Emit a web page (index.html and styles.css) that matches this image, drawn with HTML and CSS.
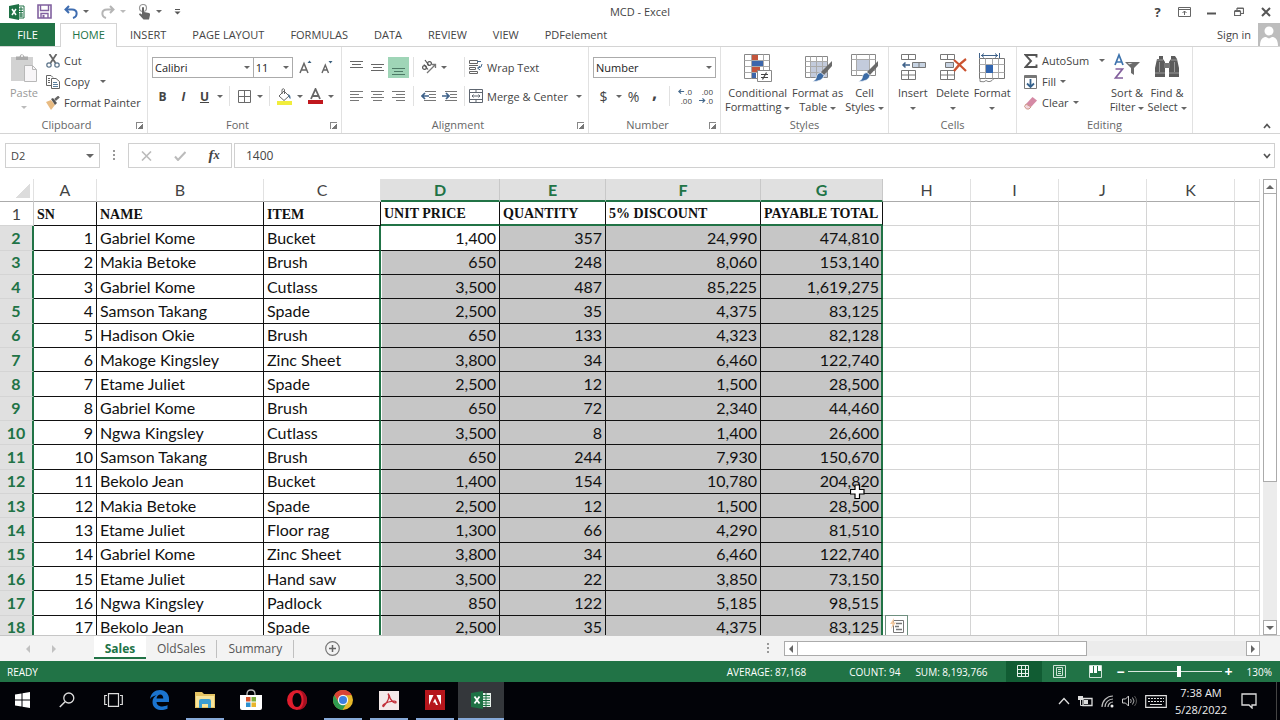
FILE: index.html
```html
<!DOCTYPE html>
<html lang="en">
<head>
    <meta charset="UTF-8">
    <meta name="viewport" content="width=device-width, initial-scale=1.0">
    <title>MCD - Excel</title>
    <link rel="stylesheet" href="styles.css">
</head>
<body>
    <!-- Title bar -->
    <header class="titlebar">
        <div class="quick">
            <svg class="app-icon" width="16" height="16" viewBox="0 0 16 16"><path d="M9 2h6v12H9z" fill="#fff" stroke="#1e7145"/><path d="M10 5h4M10 7.500h4M10 10h4M10 12h4M12 3v10" stroke="#1e7145"/><path d="M0 2l10-2v16L0 14z" fill="#1e7145"/><path d="M3 5l4 6M7 5l-4 6" stroke="#fff" stroke-width="1.500"/></svg>
            <button class="qbtn" aria-label="Save"><svg width="15" height="15" viewBox="0 0 15 15"><path d="M1 1h13v13H1z" fill="#fff" stroke="#80609f" stroke-width="1.600"/><path d="M3.500 1v5.500h8V1M4 14V9.500h7V14" fill="none" stroke="#80609f" stroke-width="1.400"/><path d="M5.500 11h2v3h-2z" fill="#80609f"/></svg></button>
            <button class="qbtn" aria-label="Undo"><svg width="14" height="14" viewBox="0 0 14 14"><path d="M5 1L1.500 4.500 5 8M1.500 4.500H8c6 0 6 7 1 8.500" fill="none" stroke="#3f6db0" stroke-width="2"/></svg><i class="caret"></i></button>
            <button class="qbtn faded" aria-label="Redo"><svg width="14" height="14" viewBox="0 0 14 14"><path d="M9 1l3.500 3.500L9 8M12.500 4.500H6c-6 0-6 7-1 8.500" fill="none" stroke="#b5b5b5" stroke-width="2"/></svg><i class="caret"></i></button>
            <button class="qbtn" aria-label="Touch mode"><svg width="13" height="16" viewBox="0 0 13 16"><circle cx="5" cy="4" r="3.500" fill="none" stroke="#999" stroke-width="1.200"/><path d="M4 3.500q1-1 2 0V8l5 1q1.500.5 1 2l-1 4.500H5.500L1 10.500q0-1.500 1.500-1L4 10.500z" fill="#666"/></svg><i class="caret"></i></button>
            <button class="qbtn" aria-label="Customize toolbar"><svg width="7" height="6" viewBox="0 0 7 6"><path d="M1 .5h5" stroke="#555"/><path d="M.5 2.500h6l-3 3z" fill="#555"/></svg></button>
        </div>
        <h1 class="title">MCD - Excel</h1>
        <div class="window-buttons">
            <button aria-label="Help" class="help">?</button>
            <button aria-label="Ribbon display options"><svg width="13" height="10" viewBox="0 0 13 10"><path d="M.5.5h12v9H.5zM.5 2.500h12M6.500 8V4M4.500 6l2-2 2 2" fill="none" stroke="#666"/></svg></button>
            <button aria-label="Minimize"><svg width="9" height="9" viewBox="0 0 9 9"><path d="M0 6.500h9" stroke="#555" stroke-width="2"/></svg></button>
            <button aria-label="Restore"><svg width="10" height="10" viewBox="0 0 10 10"><path d="M.5 4.500h6v4h-6zM.5 3.500h6M3 3V1.500h6.500v5H7M3 1h6.500" fill="none" stroke="#666" stroke-width="1.200"/></svg></button>
            <button aria-label="Close"><svg width="10" height="10" viewBox="0 0 10 10"><path d="M1 1l8 8M9 1L1 9" stroke="#555" stroke-width="2"/></svg></button>
        </div>
    </header>

    <!-- Ribbon tabs -->
    <nav class="tabs">
        <a href="#" class="file">FILE</a>
        <a href="#" class="active">HOME</a>
        <a href="#">INSERT</a>
        <a href="#">PAGE LAYOUT</a>
        <a href="#">FORMULAS</a>
        <a href="#">DATA</a>
        <a href="#">REVIEW</a>
        <a href="#">VIEW</a>
        <a href="#">PDFelement</a>
        <div class="account">
            <a href="#">Sign in</a>
            <svg width="22" height="23" viewBox="0 0 22 23"><path d="M0 0h22v23H0z" fill="#bdbdbd"/><circle cx="11" cy="8" r="4.500" fill="#fff"/><path d="M2 23c0-7 3-9 6-9l3 1.500L14 14c3 0 6 2 6 9z" fill="#fff"/></svg>
        </div>
    </nav>

    <!-- Ribbon -->
    <div class="ribbon">
        <section class="group clipboard">
            <div class="group-body">
                <button class="big faded"><svg width="28" height="30" viewBox="0 0 28 30"><path d="M1 4h22v24H1z" fill="#d2d2d2"/><path d="M6 7V3.500h3.500q2-4.500 5 0H18V7z" fill="#aaa"/><circle cx="12" cy="3" r="1" fill="#fff"/><path d="M14.500 12.500h8l4 4v12h-12z" fill="#f8f6f8" stroke="#b8b8b8"/><path d="M22.500 12.500v4h4" fill="none" stroke="#b8b8b8"/></svg><span>Paste</span><i class="caret"></i></button>
                <div class="stack">
                    <button class="small"><svg width="14" height="14" viewBox="0 0 14 14"><path d="M3.500 0L9.500 9M10.500 0L4.500 9" stroke="#666" stroke-width="1.800"/><circle cx="3" cy="11" r="2.200" fill="none" stroke="#5b7389" stroke-width="1.200"/><circle cx="11" cy="11" r="2.200" fill="none" stroke="#5b7389" stroke-width="1.200"/></svg>Cut</button>
                    <button class="small"><svg width="14" height="14" viewBox="0 0 14 14"><path d="M5 10.500H.5V.5H5l2 2M2 3.500h2M2 5.500h2M2 7.500h2" fill="none" stroke="#666"/><path d="M5.500 3.500H10l3.500 3v7h-8z" fill="#fff" stroke="#666"/><path d="M7 7.500h4M7 9.500h5M7 11.500h5" stroke="#5b7f9d"/></svg>Copy <i class="caret spaced"></i></button>
                    <button class="small"><svg width="14" height="14" viewBox="0 0 14 14"><path d="M0 6l5-2 4 5-4 5z" fill="#e8bb82"/><path d="M5 3l2-1 4 5-2 2z" fill="#555"/><path d="M9 4l4-3.500" stroke="#666" stroke-width="2.500"/></svg>Format Painter</button>
                </div>
            </div>
            <h2>Clipboard</h2><button class="launch" aria-label="Clipboard options"></button>
        </section>

        <section class="group font">
            <div class="group-body rows">
                <div class="row">
                    <span class="combo font-name"><select aria-label="Font"><option>Calibri</option></select></span>
                    <span class="combo font-size"><select aria-label="Font size"><option>11</option></select></span>
                    <button class="ib" aria-label="Increase font size"><svg width="13" height="14" viewBox="0 0 13 14"><path d="M1 13L5 3.500 9 13M2.500 10h5" fill="none" stroke="#666" stroke-width="1.500"/><path d="M8.500 3h4l-2-2.500z" fill="#3b5f7d"/></svg></button>
                    <button class="ib" aria-label="Decrease font size"><svg width="13" height="14" viewBox="0 0 13 14"><path d="M2 13l3.300-8 3.200 8M3.500 10h4" fill="none" stroke="#666" stroke-width="1.400"/><path d="M8.500 1h4l-2 2.500z" fill="#3b5f7d"/></svg></button>
                </div>
                <div class="row">
                    <button class="ib"><b>B</b></button>
                    <button class="ib"><em>I</em></button>
                    <button class="ib"><u>U</u></button>
                    <button class="drop" aria-label="Underline styles"><i class="caret"></i></button>
                    <span class="sep"></span>
                    <button class="ib" aria-label="Borders"><svg width="13" height="13" viewBox="0 0 13 13"><path d="M.5.5h12v12H.5zM6.500 0v13M0 6.500h13" fill="none" stroke="#6a6a6a"/></svg></button>
                    <button class="drop" aria-label="Border styles"><i class="caret"></i></button>
                    <span class="sep"></span>
                    <button class="ib" aria-label="Fill color"><svg width="17" height="17" viewBox="0 0 17 17"><path d="M3 8l5-5 5 5-5 4.500z" fill="#fff" stroke="#666"/><path d="M6 6V1.500q1.500-1.500 2.500 0V6" fill="none" stroke="#666"/><path d="M12 6q3 1 2.500 5-1.500 0-2-3z" fill="#4b7396"/><path d="M1 13h15v4H1z" fill="#f1ed3c"/></svg></button>
                    <button class="drop" aria-label="Fill colors"><i class="caret"></i></button>
                    <button class="ib" aria-label="Font color"><svg width="15" height="16" viewBox="0 0 15 16"><path d="M3 11L7.500 1 12 11M4.500 8h6" fill="none" stroke="#666" stroke-width="1.800"/><path d="M0 12h15v4H0z" fill="#c0171d"/></svg></button>
                    <button class="drop" aria-label="Font colors"><i class="caret"></i></button>
                </div>
            </div>
            <h2>Font</h2><button class="launch" aria-label="Font options"></button>
        </section>

        <section class="group alignment">
            <div class="group-body rows">
                <div class="row">
                    <button class="ib" aria-label="Top align"><svg width="13" height="17" viewBox="0 0 13 17"><path d="M0 2.500h13M2 5.500h9M0 8.500h13" stroke="#666"/></svg></button>
                    <button class="ib" aria-label="Middle align"><svg width="13" height="17" viewBox="0 0 13 17"><path d="M0 5.500h13M2 8.500h9M0 11.500h13" stroke="#666"/></svg></button>
                    <button class="ib on" aria-label="Bottom align"><svg width="13" height="17" viewBox="0 0 13 17"><path d="M0 9.500h13M2 12.500h9M0 15.500h13" stroke="#4d7a66"/></svg></button>
                    <span class="sep"></span>
                    <button class="ib" aria-label="Orientation"><svg width="16" height="16" viewBox="0 0 16 16"><path d="M6 14l8-8M14.500 9V5.500H11" fill="none" stroke="#777" stroke-width="1.300"/><circle cx="3.500" cy="8.500" r="1.900" fill="none" stroke="#555" stroke-width="1.200"/><path d="M3 5.500l4 5" stroke="#555" stroke-width="1.200"/><circle cx="8.500" cy="4.500" r="1.900" fill="none" stroke="#555" stroke-width="1.200"/><path d="M4 1l4 5.500" stroke="#555" stroke-width="1.200"/></svg></button>
                    <button class="drop" aria-label="Orientations"><i class="caret"></i></button>
                    <span class="sep far"></span>
                    <button class="small"><svg width="14" height="14" viewBox="0 0 14 14"><path d="M.5.500h8v3h-8zM0 5.500h9M.5 7.500h6v2h-6zM.5 11.500h8v2h-8z" fill="none" stroke="#666"/><path d="M8 1.500h4M13 4q0 4-4 4M11 6L8.500 8l2.500 2" fill="none" stroke="#45698c"/></svg>Wrap Text</button>
                </div>
                <div class="row">
                    <button class="ib" aria-label="Align left"><svg width="13" height="11" viewBox="0 0 13 11"><path d="M0 .5h13M0 3.500h9M0 6.500h13M0 9.500h9" stroke="#777"/></svg></button>
                    <button class="ib" aria-label="Center"><svg width="13" height="11" viewBox="0 0 13 11"><path d="M0 .5h13M2 3.500h9M0 6.500h13M2 9.500h9" stroke="#777"/></svg></button>
                    <button class="ib" aria-label="Align right"><svg width="13" height="11" viewBox="0 0 13 11"><path d="M0 .5h13M4 3.500h9M0 6.500h13M4 9.500h9" stroke="#777"/></svg></button>
                    <span class="sep"></span>
                    <button class="ib" aria-label="Decrease indent"><svg width="15" height="11" viewBox="0 0 15 11"><path d="M4 .5h11M8 3.500h7M8 6.500h7M3 9.500h12" stroke="#777"/><path d="M8 5H2M4 2L1 5l3 3" fill="none" stroke="#3f628a" stroke-width="1.700"/></svg></button>
                    <button class="ib" aria-label="Increase indent"><svg width="15" height="11" viewBox="0 0 15 11"><path d="M3 .5h12M8 3.500h7M8 6.500h7M3 9.500h12" stroke="#777"/><path d="M0 5h6M4 2l3 3-3 3" fill="none" stroke="#3f628a" stroke-width="1.700"/></svg></button>
                    <span class="sep"></span>
                    <button class="small"><svg width="14" height="14" viewBox="0 0 14 14"><path d="M.5.5h13v13H.5zM.5 3.500h13M.5 10.500h13M7 .5v3M7 10.500v3M3 7h8M4.500 5.500L3 7l1.500 1.500M9.500 5.500L11 7 9.500 8.500" fill="none" stroke="#5f6670"/></svg>Merge &amp; Center</button>
                    <button class="drop push" aria-label="Merge options"><i class="caret"></i></button>
                </div>
            </div>
            <h2>Alignment</h2><button class="launch" aria-label="Alignment options"></button>
        </section>

        <section class="group number">
            <div class="group-body rows">
                <div class="row">
                    <span class="combo number-format"><select aria-label="Number format"><option>Number</option></select></span>
                </div>
                <div class="row">
                    <button class="ib sign">$</button>
                    <button class="drop" aria-label="Currencies"><i class="caret"></i></button>
                    <button class="ib sign">%</button>
                    <button class="ib comma">,</button>
                    <span class="sep"></span>
                    <button class="ib decimals" aria-label="Increase decimal"><span><svg width="7" height="7" viewBox="0 0 8 7"><path d="M1 3.500h6M3.500 1L1 3.500 3.500 6" fill="none" stroke="#45698c" stroke-width="1.400"/></svg>.0</span><span>.00</span></button>
                    <button class="ib decimals" aria-label="Decrease decimal"><span>.00</span><span><svg width="7" height="7" viewBox="0 0 8 7"><path d="M0 3.500h6M4 1l2.500 2.500L4 6" fill="none" stroke="#45698c" stroke-width="1.400"/></svg>.0</span></button>
                </div>
            </div>
            <h2>Number</h2><button class="launch" aria-label="Number options"></button>
        </section>

        <section class="group styles">
            <div class="group-body">
                <button class="big wide"><svg width="28" height="30" viewBox="0 0 28 30"><path d="M.5 1.500h25v24H.5z" fill="#fff" stroke="#888"/><path d="M.5 7.500h25M.5 13.500h25M.5 19.500h25M7.500 1.500v24M19.500 1.500v24" stroke="#aaa"/><path d="M8 2h6v5H8zM8 14h8v5H8z" fill="#c4553c"/><path d="M8 8h11v5H8zM8 20h4v5H8z" fill="#3c66ab"/><path d="M13.500 17.500h14v11h-14z" fill="#fff" stroke="#888"/><path d="M17 21.500h7M17 24.500h7M22.500 19.500l-4 7" stroke="#444" stroke-width="1.200"/></svg><span>Conditional</span><span>Formatting <i class="caret"></i></span></button>
                <button class="big mid"><svg width="28" height="30" viewBox="0 0 28 30"><path d="M1.500 3.500h22v21h-22z" fill="#fff" stroke="#888"/><path d="M7 9h16v15H7z" fill="#c3cbdc"/><path d="M1.500 8.500h22M1.500 13.500h22M1.500 19.500h22M6.500 3.500v21M12.500 3.500v21M18.500 3.500v21" stroke="#aaa"/><path d="M28 8v5l-8 9-3-3z" fill="#6a6a6a"/><path d="M17 19.500l3 3q-1 6-12 6 5-2 4.500-5.500 1-3.500 4.500-3.500z" fill="#3c6ba5" stroke="#fff" stroke-width=".7"/></svg><span>Format as</span><span>Table <i class="caret"></i></span></button>
                <button class="big"><svg width="28" height="30" viewBox="0 0 28 30"><path d="M1.500 1.500h24v21h-24z" fill="#fff" stroke="#888"/><path d="M7 7h12v10H7z" fill="#c3cbdc"/><path d="M1.500 6.500h24M1.500 17.500h24M6.500 1.500v21M19.500 1.500v21" stroke="#aaa"/><path d="M28 8v5l-8 9-3-3z" fill="#6a6a6a"/><path d="M17 19.500l3 3q-1 6-12 6 5-2 4.500-5.500 1-3.500 4.500-3.500z" fill="#3c6ba5" stroke="#fff" stroke-width=".7"/></svg><span>Cell</span><span>Styles <i class="caret"></i></span></button>
            </div>
            <h2>Styles</h2>
        </section>

        <section class="group cells">
            <div class="group-body">
                <button class="big"><svg width="26" height="30" viewBox="0 0 26 30"><path d="M1.500 1.500h14v5h-14zM8.500 1.500v5M1.500 17.500h14v9h-14zM1.500 22h14M8.500 17.500v9" fill="#fff" stroke="#777"/><path d="M12.500 9.500h13v5h-13z" fill="#c7d3e2" stroke="#777"/><path d="M19 10v4" stroke="#777"/><path d="M10 12H3M5.500 9.500L3 12l2.500 2.500" fill="none" stroke="#3f628a" stroke-width="1.500"/></svg><span>Insert</span><span><i class="caret"></i></span></button>
                <button class="big"><svg width="28" height="30" viewBox="0 0 28 30"><path d="M1.500 1.500h14v5h-14zM8.500 1.500v5M1.500 17.500h14v9h-14zM1.500 22h14M8.500 17.500v9" fill="#fff" stroke="#777"/><path d="M6.500 9.500h8v5h-8z" fill="#c7d3e2" stroke="#777"/><path d="M15 7q6 5 12 11M27 6q-7 5-12 12" fill="none" stroke="#cb5330" stroke-width="2.200"/></svg><span>Delete</span><span><i class="caret"></i></span></button>
                <button class="big"><svg width="28" height="30" viewBox="0 0 28 30"><path d="M1.500 0v5M21.500 0v5M3 2.500h17M6 .5L3.500 2.500 6 4.500M17 .5l2.500 2L17 4.500" fill="none" stroke="#3f628a"/><path d="M1.500 5.500h25v20h-25z" fill="#fff" stroke="#777"/><path d="M1.500 11.500h25M1.500 19.500h25M7.500 5.500v20M14.500 5.500v20M20.500 5.500v20" stroke="#aaa"/><path d="M8 12h7v8H8z" fill="#3165b0"/><path d="M2 25.500v3q5 1 6-1 4 3 8-2" fill="none" stroke="#888"/></svg><span>Format</span><span><i class="caret"></i></span></button>
            </div>
            <h2>Cells</h2>
        </section>

        <section class="group editing">
            <div class="group-body">
                <div class="stack">
                    <button class="small"><svg width="14" height="14" viewBox="0 0 14 14"><path d="M12.500 3.500V1H1.500L7 7l-5.500 6h11v-2.500" fill="none" stroke="#555" stroke-width="1.900"/></svg>AutoSum <i class="caret spaced"></i></button>
                    <button class="small"><svg width="14" height="14" viewBox="0 0 14 14"><path d="M.5.5h12v13H.5z" fill="#fff" stroke="#777"/><path d="M.5 1h12v2H.5z" fill="#777"/><path d="M6.500 4v8M3 8.500L6.500 12 10 8.500" fill="none" stroke="#36628c" stroke-width="1.800"/></svg>Fill <i class="caret"></i></button>
                    <button class="small"><svg width="14" height="14" viewBox="0 0 14 14"><path d="M2 8l6.500-7L13 4.500 7 11z" fill="#d58aa5"/><path d="M2 8l5 3-2 2H2.500L.5 10.500z" fill="#f2d5df" stroke="#c98"/></svg>Clear <i class="caret"></i></button>
                </div>
                <button class="big"><svg width="28" height="30" viewBox="0 0 28 30"><path d="M2 12L6 2l4 10M3.500 9h5" fill="none" stroke="#3d73ad" stroke-width="1.700"/><path d="M2.500 16h7l-7 9h7.500" fill="none" stroke="#83609d" stroke-width="1.700"/><path d="M12 9h15l-6 6v7l-3-2v-5z" fill="#6c6c6c"/><path d="M14.500 10h5l-3 1.500z" fill="#ddd"/></svg><span>Sort &amp;</span><span>Filter <i class="caret"></i></span></button>
                <button class="big"><svg width="26" height="30" viewBox="0 0 26 30"><path d="M5 3h4v3l2 3v15H1V15l2-9h2zM17 3h4l2 3 2 9v9H15V9l2-3z" fill="#5c5c5c"/><path d="M10 10h6v5h-6z" fill="#777"/><path d="M3 7h6M17 7h6M1 20h10M15 20h10M5.500 9v10M20.500 9v10" stroke="#999"/></svg><span>Find &amp;</span><span>Select <i class="caret"></i></span></button>
            </div>
            <h2>Editing</h2>
        </section>
        <button class="collapse" aria-label="Collapse the ribbon"><svg width="8" height="6" viewBox="0 0 8 6"><path d="M1 5l3-3.500L7 5" fill="none" stroke="#555" stroke-width="1.700"/></svg></button>
    </div>

    <!-- Formula bar -->
    <div class="formula-bar">
        <div class="name-box"><input type="text" value="D2" aria-label="Name box"><i class="caret"></i></div>
        <span class="grip"></span>
        <div class="formula-buttons">
            <button aria-label="Cancel"><svg width="11" height="10" viewBox="0 0 11 10"><path d="M1 .5l9 9M10 .5l-9 9" stroke="#bbb" stroke-width="1.600"/></svg></button>
            <button aria-label="Enter"><svg width="12" height="10" viewBox="0 0 12 10"><path d="M1 5.500L4 9l7.500-8" fill="none" stroke="#bbb" stroke-width="2"/></svg></button>
            <button class="fx">f<small>x</small></button>
        </div>
        <div class="formula"><input type="text" value="1400" aria-label="Formula"><svg width="8" height="6" viewBox="0 0 8 6"><path d="M1 1l3 3.500L7 1" fill="none" stroke="#555" stroke-width="1.700"/></svg></div>
    </div>

    <!-- Worksheet -->
    <main class="sheet">
        <div class="grid">
            <table>
                <colgroup>
                    <col class="c-num"><col class="c-a"><col class="c-b"><col class="c-c"><col class="c-d"><col class="c-e"><col class="c-f"><col class="c-g"><col class="c-h"><col class="c-i"><col class="c-i"><col class="c-i"><col>
                </colgroup>
                <thead>
                    <tr><th class="corner"></th><th>A</th><th>B</th><th>C</th><th class="sel">D</th><th class="sel">E</th><th class="sel">F</th><th class="sel">G</th><th>H</th><th>I</th><th>J</th><th>K</th><th></th></tr>
                </thead>
                <tbody>
                    <tr class="heads"><th>1</th><td>SN</td><td>NAME</td><td>ITEM</td><td>UNIT PRICE</td><td>QUANTITY</td><td>5% DISCOUNT</td><td>PAYABLE TOTAL</td><td></td><td></td><td></td><td></td><td></td></tr>
                    <tr><th>2</th><td>1</td><td>Gabriel Kome</td><td>Bucket</td><td class="current">1,400</td><td>357</td><td>24,990</td><td>474,810</td><td></td><td></td><td></td><td></td><td></td></tr>
                    <tr><th>3</th><td>2</td><td>Makia Betoke</td><td>Brush</td><td>650</td><td>248</td><td>8,060</td><td>153,140</td><td></td><td></td><td></td><td></td><td></td></tr>
                    <tr><th>4</th><td>3</td><td>Gabriel Kome</td><td>Cutlass</td><td>3,500</td><td>487</td><td>85,225</td><td>1,619,275</td><td></td><td></td><td></td><td></td><td></td></tr>
                    <tr><th>5</th><td>4</td><td>Samson Takang</td><td>Spade</td><td>2,500</td><td>35</td><td>4,375</td><td>83,125</td><td></td><td></td><td></td><td></td><td></td></tr>
                    <tr><th>6</th><td>5</td><td>Hadison Okie</td><td>Brush</td><td>650</td><td>133</td><td>4,323</td><td>82,128</td><td></td><td></td><td></td><td></td><td></td></tr>
                    <tr><th>7</th><td>6</td><td>Makoge Kingsley</td><td>Zinc Sheet</td><td>3,800</td><td>34</td><td>6,460</td><td>122,740</td><td></td><td></td><td></td><td></td><td></td></tr>
                    <tr><th>8</th><td>7</td><td>Etame Juliet</td><td>Spade</td><td>2,500</td><td>12</td><td>1,500</td><td>28,500</td><td></td><td></td><td></td><td></td><td></td></tr>
                    <tr><th>9</th><td>8</td><td>Gabriel Kome</td><td>Brush</td><td>650</td><td>72</td><td>2,340</td><td>44,460</td><td></td><td></td><td></td><td></td><td></td></tr>
                    <tr><th>10</th><td>9</td><td>Ngwa Kingsley</td><td>Cutlass</td><td>3,500</td><td>8</td><td>1,400</td><td>26,600</td><td></td><td></td><td></td><td></td><td></td></tr>
                    <tr><th>11</th><td>10</td><td>Samson Takang</td><td>Brush</td><td>650</td><td>244</td><td>7,930</td><td>150,670</td><td></td><td></td><td></td><td></td><td></td></tr>
                    <tr><th>12</th><td>11</td><td>Bekolo Jean</td><td>Bucket</td><td>1,400</td><td>154</td><td>10,780</td><td class="anchor">204,820<svg class="pointer" width="15" height="15" viewBox="0 0 15 15"><path d="M5 1h4.500v4.500H14V10H9.500v4.500H5V10H.5V5.500H5z" fill="#fff" stroke="#000" stroke-width="1.200"/></svg></td><td></td><td></td><td></td><td></td><td></td></tr>
                    <tr><th>13</th><td>12</td><td>Makia Betoke</td><td>Spade</td><td>2,500</td><td>12</td><td>1,500</td><td>28,500</td><td></td><td></td><td></td><td></td><td></td></tr>
                    <tr><th>14</th><td>13</td><td>Etame Juliet</td><td>Floor rag</td><td>1,300</td><td>66</td><td>4,290</td><td>81,510</td><td></td><td></td><td></td><td></td><td></td></tr>
                    <tr><th>15</th><td>14</td><td>Gabriel Kome</td><td>Zinc Sheet</td><td>3,800</td><td>34</td><td>6,460</td><td>122,740</td><td></td><td></td><td></td><td></td><td></td></tr>
                    <tr><th>16</th><td>15</td><td>Etame Juliet</td><td>Hand saw</td><td>3,500</td><td>22</td><td>3,850</td><td>73,150</td><td></td><td></td><td></td><td></td><td></td></tr>
                    <tr><th>17</th><td>16</td><td>Ngwa Kingsley</td><td>Padlock</td><td>850</td><td>122</td><td>5,185</td><td>98,515</td><td></td><td></td><td></td><td></td><td></td></tr>
                    <tr><th>18</th><td>17</td><td>Bekolo Jean</td><td>Spade</td><td>2,500</td><td>35</td><td>4,375</td><td>83,125</td><td class="anchor"><button class="quick-analysis" aria-label="Quick analysis"><svg width="14" height="16" viewBox="0 0 14 16"><path d="M3.500 2.500h10v12h-10z" fill="#fff" stroke="#777"/><path d="M6 5.500h6M5 8.500h4M6 11.500h6" stroke="#777" stroke-width="1.500"/><path d="M4 0L0 6h2.500L1 11l5-6.500H3.500z" fill="#f3c9a0"/></svg></button></td><td></td><td></td><td></td><td></td></tr>
                </tbody>
            </table>
        </div>
        <div class="vscroll">
            <button class="arrow up" aria-label="Scroll up"></button>
            <div class="thumb"></div>
            <div class="track"></div>
            <button class="arrow down" aria-label="Scroll down"></button>
        </div>
    </main>

    <!-- Sheet tabs -->
    <div class="sheet-tabs">
        <div class="sheet-nav">
            <button class="arrow left" aria-label="Previous sheets"></button>
            <button class="arrow right" aria-label="Next sheets"></button>
        </div>
        <a href="#" class="active">Sales</a>
        <a href="#">OldSales</a>
        <a href="#">Summary</a>
        <button class="add" aria-label="New sheet"><svg width="15" height="15" viewBox="0 0 15 15"><circle cx="7.500" cy="7.500" r="6.800" fill="none" stroke="#777" stroke-width="1.200"/><path d="M7.500 4v7M4 7.500h7" stroke="#666" stroke-width="1.500"/></svg></button>
        <span class="grip"></span>
        <div class="hscroll">
            <button class="arrow left" aria-label="Scroll left"></button>
            <div class="thumb"></div>
            <div class="track"></div>
            <button class="arrow right" aria-label="Scroll right"></button>
        </div>
    </div>

    <!-- Status bar -->
    <div class="status">
        <span class="ready">READY</span>
        <span class="average">AVERAGE: 87,168</span>
        <span class="count">COUNT: 94</span>
        <span class="sum">SUM: 8,193,766</span>
        <div class="views">
            <button class="on" aria-label="Normal view"><svg width="13" height="13" viewBox="0 0 13 13"><path d="M.5.5h11v11H.5zM4.500.5v11M8.500.5v11M.5 4.500h11M.5 8.500h11" fill="none" stroke="#e8f2ec"/></svg></button>
            <button aria-label="Page layout view"><svg width="13" height="13" viewBox="0 0 13 13"><path d="M.5.5h12v12H.5zM3.500 2.500h6v8h-6zM5 4.500h3M5 6.500h3M5 8.500h3" fill="none" stroke="#cfe3d7"/></svg></button>
            <button aria-label="Page break view"><svg width="13" height="13" viewBox="0 0 13 13"><path d="M.5.5h12v12H.5z" fill="none" stroke="#cfe3d7"/><path d="M1 1h3v7H1zM5 1h3v7H5zM9 1h3v5H9z" fill="#fff"/></svg></button>
        </div>
        <div class="zoom">
            <button aria-label="Zoom out">−</button>
            <input type="range" min="10" max="250" value="142" aria-label="Zoom">
            <button aria-label="Zoom in">+</button>
            <span>130%</span>
        </div>
    </div>

    <!-- Windows taskbar -->
    <footer class="taskbar">
        <button aria-label="Start"><svg width="15" height="16" viewBox="0 0 15 16"><path d="M0 2.500l6.500-1v6H0zM7.500 1.300L15 0v7.500H7.500zM0 8.500h6.500v6L0 13.500zM7.500 8.500H15V16l-7.500-1.200z" fill="#fff"/></svg></button>
        <button aria-label="Search"><svg width="16" height="16" viewBox="0 0 16 16"><circle cx="9.800" cy="6" r="5" fill="none" stroke="#ddd" stroke-width="1.300"/><path d="M6 9.800L.8 15" stroke="#ddd" stroke-width="1.500"/></svg></button>
        <button aria-label="Task view"><svg width="19" height="14" viewBox="0 0 19 14"><path d="M4.500.7h10v12.600h-10zM3 2.500H.7v9H3M16 2.500h2.300v9H16" fill="none" stroke="#ddd" stroke-width="1.200"/></svg></button>
        <button aria-label="Edge"><svg width="19" height="20" viewBox="0 0 19 20"><path d="M0 9C1 3 5 0 10 0c6 0 9 4.500 9 9v3H6.500c.3 5 7 5.500 11 3v3.800C10 22 2.500 19 2.500 12c0-3 1.500-5.500 4-6.700C4 5.500 1.500 7 0 9zM6.500 8.500h6.800c0-5.500-6-5-6.800 0z" fill="#1b74cf" fill-rule="evenodd"/></svg></button>
        <button class="open" aria-label="File Explorer"><svg width="20" height="18" viewBox="0 0 20 18"><path d="M0 1h7l2 2h11v14H0z" fill="#e5c463"/><path d="M1 5h18v11H1z" fill="#f8e59b"/><path d="M4 10q0-2 2-2h8q2 0 2 2v7h-3v-4H7v4H4z" fill="#3b9ed2"/></svg></button>
        <button aria-label="Store"><svg width="22" height="22" viewBox="0 0 22 22"><path d="M7 7V5q0-4 4-4t4 4v2" fill="none" stroke="#bbb" stroke-width="1.300"/><path d="M0 6h22v13q0 2-2 2H2q-2 0-2-2z" fill="#fff"/><path d="M6 8h4.500v4.500H6z" fill="#d9512c"/><path d="M11.500 8H16v4.500h-4.500z" fill="#7cae3b"/><path d="M6 13.500h4.500V18H6z" fill="#2c90cf"/><path d="M11.500 13.500H16V18h-4.500z" fill="#e9b52c"/></svg></button>
        <button aria-label="Opera"><svg width="22" height="22" viewBox="0 0 22 22"><path d="M11 1a10 10 0 100 20 10 10 0 000-20zm0 3c3 0 4.500 3.500 4.500 7S14 18 11 18s-4.500-3.500-4.500-7S8 4 11 4z" fill="#df1d2d" fill-rule="evenodd"/><path d="M11 1c7 0 10 5 10 10s-3 10-10 10c5-1 6.500-5 6.500-10S16 2 11 1z" fill="#a40f21"/></svg></button>
        <button class="open" aria-label="Chrome"><svg width="22" height="22" viewBox="0 0 22 22"><circle cx="11" cy="11" r="10" fill="#e6b82a"/><path d="M2.300 6A10 10 0 0119.700 6L11 6.500 6.700 13.500z" fill="#d94335"/><path d="M2.300 6A10 10 0 0010.500 21L15 13.500 7 14z" fill="#2f9b50"/><circle cx="11" cy="11" r="5.200" fill="#f5f5f5"/><circle cx="11" cy="11" r="4" fill="#3d7fe0"/></svg></button>
        <button class="open" aria-label="PDF reader"><svg width="20" height="19" viewBox="0 0 20 19"><path d="M0 0h20v19H0z" fill="#f4e9e9"/><path d="M9 2.500c3 4-1 9-4.500 13-2 0 0-3 5-4.500s8-1 7.500.5-6-1-7-8" fill="none" stroke="#c3313b" stroke-width="1.300"/></svg></button>
        <button class="open" aria-label="Adobe Reader"><svg width="20" height="20" viewBox="0 0 20 20"><path d="M0 0h20v20H0z" fill="#b5161c"/><path d="M4 5h4.500L4 15zM16 5h-4.500L16 15zM10 8.500l3 6.500h-2l-1-2.500H8z" fill="#fff"/></svg></button>
        <button class="open current" aria-label="Excel"><svg width="20" height="18" viewBox="0 0 20 18"><path d="M10 2h10v14H10z" fill="#e9f2ec"/><path d="M12 4.500h7M12 7h7M12 9.500h7M12 12h7M12 14.500h7M15 2v14" stroke="#1e7145"/><path d="M0 2l12-2v18L0 16z" fill="#1e7145"/><path d="M3.500 5.500l5 7M8.500 5.500l-5 7" stroke="#fff" stroke-width="1.800"/></svg></button>
        <div class="tray">
            <svg width="12" height="8" viewBox="0 0 12 8"><path d="M1 7l5-5.500L11 7" fill="none" stroke="#ddd" stroke-width="1.300"/></svg>
            <svg width="15" height="13" viewBox="0 0 15 13"><path d="M5 3.500h9v7H5z" fill="none" stroke="#ddd" stroke-width="1.300"/><path d="M6 5h4v4H6zM0 1h5v4H0z" fill="#ddd"/><path d="M2.500 5v5.500H5" fill="none" stroke="#ddd"/></svg>
            <svg width="13" height="13" viewBox="0 0 13 13"><path d="M1 12A11 11 0 0112 1M4 12a8 8 0 018-8M7 12a5 5 0 015-5" fill="none" stroke="#bbb" stroke-width="1.200"/><circle cx="11" cy="11" r="1.500" fill="#eee"/></svg>
            <svg width="15" height="12" viewBox="0 0 15 12"><path d="M.5 4h3L6.500 1v10l-3-3h-3z" fill="none" stroke="#ccc"/><path d="M8.500 4q1.500 2 0 4M10.500 2.500q3 3.500 0 7" fill="none" stroke="#aaa"/><path d="M12.500 1q4 5 0 10" fill="none" stroke="#555"/></svg>
            <svg width="22" height="13" viewBox="0 0 22 13"><path d="M.7.700h20.600v11.600H.7z" fill="none" stroke="#ddd" stroke-width="1.200"/><path d="M3 3.500h16M3 6.500h16" stroke="#ddd" stroke-dasharray="2 1"/><path d="M5 9.500h12" stroke="#ddd"/></svg>
            <div class="clock"><span>7:38 AM</span><span>5/28/2022</span></div>
            <svg width="16" height="16" viewBox="0 0 16 16"><path d="M1 1h14v11h-4v3l-3-3H1z" fill="none" stroke="#ddd" stroke-width="1.300"/></svg>
        </div>
    </footer>
</body>
</html>
```
FILE: styles.css
```css
* {
    box-sizing: border-box;
}
body {
    margin: 0;
    height: 100vh;
    display: flex;
    flex-direction: column;
    overflow: hidden;
    background-color: #fff;
    color: #444;
    font-family: "Open Sans", "Noto Sans", sans-serif;
    font-size: 11px;
}
button, input, select {
    font: inherit;
    color: inherit;
    margin: 0;
    padding: 0;
    border: 0;
    background: none;
}
button {
    display: flex;
    align-items: center;
    justify-content: center;
    white-space: nowrap;
}
a {
    color: inherit;
    text-decoration: none;
}
svg {
    flex-shrink: 0;
}
.caret {
    display: inline-block;
    flex-shrink: 0;
    border: 3px solid transparent;
    border-top-color: #666;
    border-bottom: 0;
    vertical-align: middle;
}
.faded {
    color: #999;
}
.faded .caret {
    border-top-color: #bbb;
}

/* Title bar */
.titlebar {
    display: grid;
    grid-template-columns: 1fr auto 1fr;
    align-items: center;
    height: 23px;
    flex-shrink: 0;
}
.quick {
    display: flex;
    align-items: center;
    gap: 12px;
    padding-left: 9px;
}
.qbtn {
    gap: 5px;
}
.title {
    margin: 0;
    font-size: 11px;
    font-weight: normal;
}
.window-buttons {
    display: flex;
    justify-content: flex-end;
    padding-right: 1px;
}
.window-buttons button {
    width: 27px;
    height: 21px;
}
.window-buttons .help {
    font-size: 13px;
    font-weight: bold;
}

/* Ribbon tabs */
.tabs {
    display: flex;
    height: 24px;
    flex-shrink: 0;
    border-bottom: 1px solid #d4d4d4;
}
.tabs > a {
    height: 23px;
    line-height: 24px;
    padding: 0 13px;
}
.tabs .file {
    width: 55px;
    padding: 0;
    margin-right: 5px;
    text-align: center;
    background-color: #217346;
    color: #fff;
}
.tabs .active {
    height: 24px;
    width: 57px;
    line-height: 22px;
    padding: 0;
    text-align: center;
    background-color: #fff;
    border: 1px solid #d4d4d4;
    border-bottom: 0;
    color: #217346;
}
.account {
    display: flex;
    align-items: center;
    gap: 7px;
    margin-left: auto;
}

/* Ribbon */
.ribbon {
    display: flex;
    height: 87px;
    flex-shrink: 0;
    border-bottom: 1px solid #d4d4d4;
}
.group {
    display: grid;
    grid-template-columns: 1fr 14px;
    grid-template-rows: 70px 16px;
    border-right: 1px solid #e1e1e1;
    padding: 0 4px;
    flex-shrink: 0;
}
.group-body {
    grid-column: 1 / 3;
    display: flex;
}
.group h2 {
    margin: 0;
    grid-column: 1;
    grid-row: 2;
    font-size: 11px;
    line-height: 16px;
    font-weight: normal;
    text-align: center;
    color: #666;
}
.styles h2, .cells h2, .editing h2 {
    grid-column: 1 / 3;
}
.clipboard { width: 148px; }
.font { width: 194px; }
.alignment { width: 247px; }
.number { width: 132px; }
.styles { width: 168px; }
.cells { width: 128px; }
.editing { width: 176px; }
.launch {
    grid-column: 2;
    grid-row: 2;
    align-self: center;
    justify-self: end;
    width: 7px;
    height: 7px;
    border-left: 1px solid #888;
    border-top: 1px solid #888;
    background: linear-gradient(135deg, transparent 55%, #777 55%);
}
.rows {
    flex-direction: column;
    gap: 7px;
    padding-top: 9px;
}
.row {
    display: flex;
    align-items: center;
    height: 22px;
}
.stack {
    display: flex;
    flex-direction: column;
    padding-top: 3px;
    padding-left: 2px;
    width: 98px;
}
.stack .small {
    height: 21px;
}
.small {
    gap: 4px;
    justify-content: flex-start;
}
.spaced {
    margin-left: 6px;
}
.big {
    flex-direction: column;
    justify-content: flex-start;
    width: 40px;
    padding-top: 6px;
    line-height: 14px;
}
.big svg {
    margin-bottom: 3px;
}
.big.wide { width: 66px; }
.big.mid { width: 56px; }
.clipboard .big .caret {
    margin-top: 6px;
}
.editing .stack {
    width: 86px;
    padding-left: 3px;
}
.ib {
    width: 21px;
    height: 21px;
    flex-shrink: 0;
}
.ib b, .ib em, .ib u {
    font-size: 12px;
    font-weight: bold;
}
.ib.on {
    background-color: #9fd5b7;
}
.ib.sign {
    font-size: 14px;
}
.ib.comma {
    font-size: 18px;
    font-weight: bold;
    line-height: 10px;
    padding-bottom: 8px;
}
.ib.decimals {
    flex-direction: column;
    align-items: flex-end;
    padding-right: 3px;
    font-size: 8px;
    line-height: 9px;
}
.drop {
    width: 10px;
    height: 21px;
}
.drop.push {
    margin-left: auto;
    margin-right: 0;
}
.sep {
    width: 1px;
    height: 20px;
    margin: 0 4px;
    background-color: #e1e1e1;
}
.sep.far {
    margin-left: 15px;
}
.combo {
    position: relative;
    height: 21px;
    border: 1px solid #ababab;
}
.combo select {
    appearance: none;
    width: 100%;
    height: 19px;
    padding-left: 2px;
    color: #222;
}
.combo::after {
    content: "";
    position: absolute;
    right: 3px;
    top: 8px;
    border: 3px solid transparent;
    border-top-color: #666;
    border-bottom: 0;
    pointer-events: none;
}
.font-name { width: 104px; }
.font-size { width: 40px; border-left: 0; margin-right: 2px; }
.number-format { width: 123px; }
.collapse {
    align-self: flex-end;
    margin-left: auto;
    width: 27px;
    height: 15px;
}

/* Formula bar */
.formula-bar {
    display: flex;
    align-items: center;
    height: 45px;
    padding: 0 5px 2px;
    flex-shrink: 0;
}
.name-box, .formula-buttons, .formula {
    display: flex;
    align-items: center;
    height: 25px;
    border: 1px solid #d0d0d0;
}
.name-box {
    width: 95px;
    padding: 0 5px;
}
.name-box input {
    flex: 1;
    min-width: 0;
}
.name-box .caret {
    border-width: 4px 4px 0;
}
.grip {
    width: 2px;
    height: 11px;
    margin: 0 13px;
    background: repeating-linear-gradient(#999 0 2px, transparent 2px 4px);
}
.formula-buttons {
    width: 104px;
}
.formula-buttons button {
    flex: 1;
}
.formula-buttons .fx {
    font-family: "Liberation Serif", serif;
    font-size: 15px;
    font-style: italic;
    font-weight: bold;
}
.formula {
    flex: 1;
    margin-left: 2px;
    padding: 0 3px 0 11px;
    font-size: 12px;
}
.formula input {
    flex: 1;
}

/* Worksheet */
.sheet {
    display: flex;
    flex: 1;
    min-height: 0;
    font-family: Lato, sans-serif;
    font-size: 16px;
    border-bottom: 1px solid #c6c6c6;
}
.grid {
    flex: 1;
    min-width: 0;
    overflow: hidden;
}
table {
    table-layout: fixed;
    width: 100%;
    height: 461px;
    border-spacing: 0;
    line-height: 20px;
}
.c-num { width: 34px; }
.c-a { width: 63px; }
.c-b { width: 167px; }
.c-c { width: 117px; }
.c-d { width: 119px; }
.c-e { width: 106px; }
.c-f { width: 155px; }
.c-g { width: 122px; }
.c-h, .c-i { width: 88px; }
th, td {
    height: 24px;
    padding: 0 3px;
    white-space: nowrap;
    overflow: hidden;
    border-right: 1px solid #d4d4d4;
    border-bottom: 1px solid #d4d4d4;
}
th {
    font-weight: normal;
    text-align: center;
    color: #444;
}
thead th {
    height: 22px;
    border-right-color: #e1e1e1;
    border-bottom-color: #ababab;
}
thead .sel {
    padding-top: 1px;
    background-color: #e0e0e0;
    border-right-color: #c8c8c8;
    border-bottom: 2px solid #217346;
    color: #217346;
    font-weight: bold;
}
.corner {
    background: linear-gradient(135deg, transparent 50%, #dcdcdc 50%) 16px 5px / 14px 14px no-repeat;
}
tbody th {
    padding: 0;
    background-color: #e0e0e0;
    border-right: 2px solid #217346;
    color: #217346;
    font-weight: bold;
}
/* columns A to G hold data and have black cell borders */
td:nth-child(-n+8) {
    border-color: #111;
    color: #111;
    text-align: right;
}
td:nth-child(3), td:nth-child(4) {
    text-align: left;
}
td:nth-child(n+5):nth-child(-n+8) {
    background-color: #c6c6c6;
}
td:nth-child(4), td:nth-child(8) {
    border-right: 2px solid #217346;
}
td:nth-child(8) {
    padding-right: 2px;
}
td:nth-child(5) {
    box-shadow: inset 1px 0 #fff;
}
tbody .current {
    background-color: #fff !important;
}
.heads th {
    background-color: #fff;
    border-right: 1px solid #c8c8c8;
    color: #444;
    font-weight: normal;
}
.heads td:nth-child(-n+8) {
    padding: 2px 0 0 3px;
    background-color: #fff;
    border-right: 1px solid #111;
    font-family: "Liberation Serif", serif;
    font-size: 14px;
    font-weight: bold;
    text-align: left;
}
.heads td:nth-child(n+5):nth-child(-n+8) {
    border-bottom: 2px solid #217346;
}
.anchor {
    position: relative;
    overflow: visible;
}
.pointer {
    position: absolute;
    right: 16px;
    bottom: -6px;
}
.quick-analysis {
    position: absolute;
    left: 2px;
    top: -1px;
    width: 23px;
    height: 22px;
    background-color: #fff;
    border: 1px solid #6f8f7f;
}

/* Scroll bars */
.vscroll {
    display: flex;
    flex-direction: column;
    width: 14px;
    margin: 0 3px;
}
.hscroll {
    display: flex;
    width: 476px;
    height: 15px;
    margin-right: 20px;
}
.vscroll .arrow, .hscroll .arrow {
    width: 14px;
    height: 15px;
    background-color: #fff;
    border: 1px solid #ababab;
}
.arrow::before {
    content: "";
    border: 4px solid transparent;
}
.arrow.up::before { border-bottom-color: #666; border-top: 0; }
.arrow.down::before { border-top-color: #666; border-bottom: 0; }
.arrow.left::before { border-right-color: #666; border-left: 0; }
.arrow.right::before { border-left-color: #666; border-right: 0; }
.thumb {
    flex: 29;
    background-color: #fff;
    border: 1px solid #ababab;
}
.vscroll .thumb {
    border-top: 0;
}
.hscroll .thumb {
    border-left: 0;
}
.track {
    background-color: #ececec;
}
.vscroll .track { flex: 14; }
.hscroll .track { flex: 16; }

/* Sheet tabs */
.sheet-tabs {
    display: flex;
    align-items: center;
    height: 25px;
    flex-shrink: 0;
    background-color: #f3f3f3;
    font-size: 12px;
    color: #555;
}
.sheet-nav {
    display: flex;
    justify-content: center;
    gap: 22px;
    width: 94px;
    padding-right: 12px;
    opacity: .35;
}
.sheet-tabs a {
    height: 18px;
    line-height: 17px;
    padding: 0 11px;
    border-right: 1px solid #c0c0c0;
}
.sheet-tabs .active {
    align-self: flex-start;
    width: 52px;
    height: 23px;
    line-height: 25px;
    padding: 0;
    text-align: center;
    background-color: #fff;
    border-right: 0;
    border-bottom: 2px solid #217346;
    color: #217346;
    font-weight: bold;
}
.add {
    margin-left: 31px;
}
.sheet-tabs .grip {
    margin-left: auto;
    margin-right: 15px;
}

/* Status bar */
.status {
    display: flex;
    align-items: center;
    height: 21px;
    flex-shrink: 0;
    padding: 0 8px 0 7px;
    background-color: #217346;
    color: #fff;
    font-size: 10px;
}
.average {
    margin-left: auto;
    margin-right: 43px;
}
.count {
    margin-right: 15px;
}
.sum {
    margin-right: 18px;
}
.views {
    display: flex;
}
.views button {
    width: 36px;
    height: 21px;
}
.views .on {
    background-color: #115c33;
}
.zoom {
    display: flex;
    align-items: center;
}
.zoom button {
    width: 14px;
    font-size: 14px;
    font-weight: bold;
}
.zoom input {
    appearance: none;
    width: 94px;
    height: 11px;
    background: linear-gradient(#d9e8df, #d9e8df) center / 100% 1px no-repeat;
}
.zoom input::-webkit-slider-thumb {
    appearance: none;
    width: 4px;
    height: 11px;
    background-color: #fff;
}
.zoom span {
    margin-left: 11px;
}

/* Windows taskbar */
.taskbar {
    display: flex;
    height: 38px;
    flex-shrink: 0;
    background-color: #020308;
    color: #eee;
}
.taskbar > button {
    width: 46px;
    height: 38px;
    border-bottom: 2px solid transparent;
}
.taskbar > button:first-child {
    width: 44px;
}
.taskbar .open {
    border-bottom: 2px solid #86a9d8;
    background-clip: padding-box;
    width: 38px;
    margin: 0 4px;
}
.taskbar .open.current {
    width: 46px;
    margin: 0;
    background-color: #34373b;
}
.tray {
    display: flex;
    align-items: center;
    gap: 8px;
    margin-left: auto;
    margin-right: 3px;
    padding-right: 19px;
    border-right: 1px solid #444;
}
.clock {
    display: flex;
    flex-direction: column;
    align-items: center;
    width: 52px;
    margin-right: 6px;
    line-height: 17px;
}
```
